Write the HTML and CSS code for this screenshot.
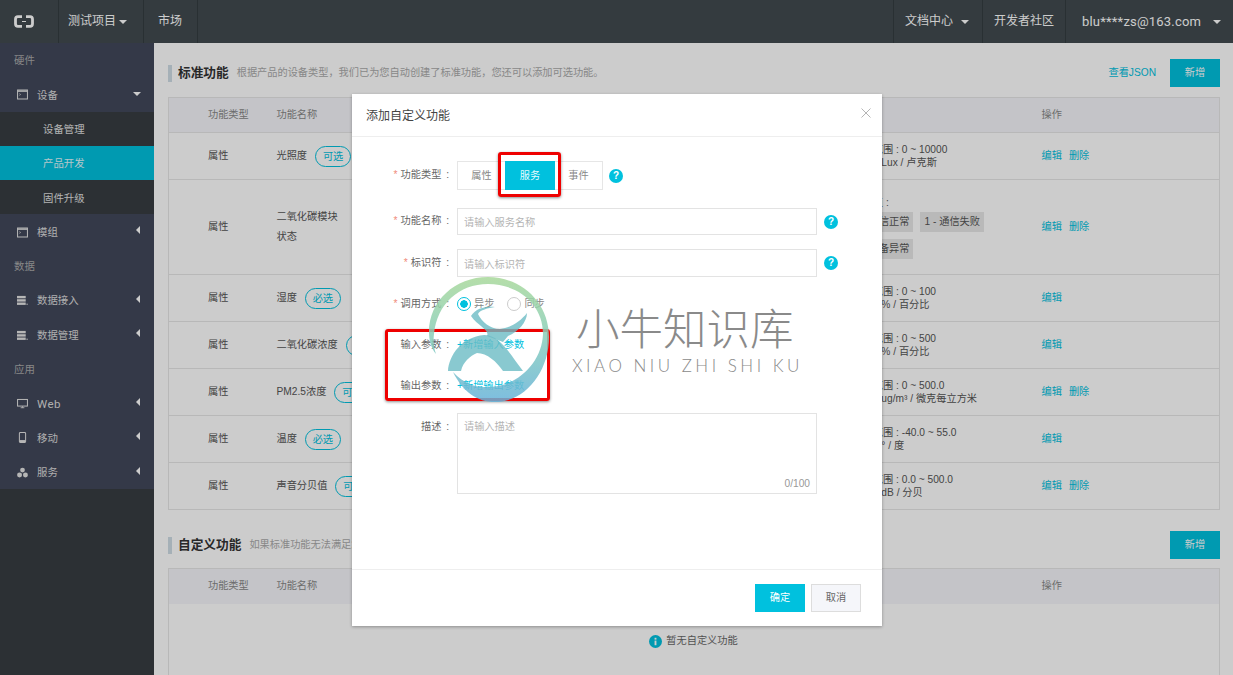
FILE: index.html
```html
<!DOCTYPE html>
<html lang="zh-CN">
<head>
<meta charset="utf-8">
<title>添加自定义功能</title>
<link rel="stylesheet" href="styles.css">
</head>
<body>
<svg width="0" height="0" class="defs">
  <defs>
    <symbol id="i-term" viewBox="0 0 12 12"><rect x=".6" y="1.1" width="10.8" height="9.8" fill="none" stroke="currentColor" stroke-width="1.1"/><rect x="1" y="1.5" width="10" height="1.6" fill="currentColor"/><path d="M2.5 5l1.5 1-1.5 1" fill="none" stroke="currentColor" stroke-width=".7"/></symbol>
    <symbol id="i-data" viewBox="0 0 12 12"><rect x="0" y="1" width="9.5" height="2.6" fill="currentColor"/><rect x="0" y="4.6" width="9.5" height="2.6" fill="currentColor"/><rect x="0" y="8.2" width="9.5" height="2.6" fill="currentColor"/><rect x="10.4" y="9.4" width="1.2" height="1.4" fill="currentColor"/></symbol>
    <symbol id="i-web" viewBox="0 0 12 12"><rect x=".6" y="1.6" width="10.8" height="7.2" fill="none" stroke="currentColor" stroke-width="1.1"/><path d="M4 10.6h4M6 9v1.5" stroke="currentColor" stroke-width="1"/></symbol>
    <symbol id="i-mob" viewBox="0 0 12 12"><rect x="2.6" y=".6" width="6.8" height="10.8" rx="1" fill="none" stroke="currentColor" stroke-width="1.1"/><rect x="3" y="8.8" width="6" height="2.4" fill="currentColor"/></symbol>
    <symbol id="i-svc" viewBox="0 0 12 12"><circle cx="6" cy="3.4" r="2.6" fill="currentColor"/><circle cx="2.8" cy="8.8" r="2.7" fill="currentColor"/><circle cx="9.2" cy="8.8" r="2.7" fill="currentColor"/></symbol>
  </defs>
</svg>
<header class="topbar">
  <div class="cell logo-cell">
    <svg class="logo" viewBox="0 0 20 13"><path d="M8 1.6H4A2.6 2.6 0 0 0 1.5 4.2v4.6A2.6 2.6 0 0 0 4 11.4h4M12 1.6H16a2.6 2.6 0 0 1 2.5 2.6v4.6a2.6 2.6 0 0 1-2.5 2.6h-4" fill="none" stroke="#fff" stroke-width="2.8"/><path d="M8 6.5h4" stroke="#fff" stroke-width="1"/></svg>
  </div>
  <div class="cell proj">测试项目<i class="caret-down cd-near"></i></div>
  <div class="cell market">市场</div>
  <div class="spacer"></div>
  <div class="cell docs">文档中心<i class="caret-down cd-far"></i></div>
  <div class="cell comm">开发者社区</div>
  <div class="cell user"><span class="email">blu****zs@163.com</span><i class="caret-down cd-user"></i></div>
</header>
<div class="shell">
  <nav class="side">
    <div class="menu">
      <div class="label">硬件</div>
      <div class="item"><svg class="ico"><use href="#i-term"/></svg>设备<i class="caret-down cd-side"></i></div>
      <div class="sub">设备管理</div>
      <div class="sub active">产品开发</div>
      <div class="sub">固件升级</div>
      <div class="item"><svg class="ico"><use href="#i-term"/></svg>模组<i class="caret-left"></i></div>
      <div class="label">数据</div>
      <div class="item"><svg class="ico"><use href="#i-data"/></svg>数据接入<i class="caret-left"></i></div>
      <div class="item"><svg class="ico"><use href="#i-data"/></svg>数据管理<i class="caret-left"></i></div>
      <div class="label">应用</div>
      <div class="item"><svg class="ico"><use href="#i-web"/></svg><span class="web">Web</span><i class="caret-left"></i></div>
      <div class="item"><svg class="ico"><use href="#i-mob"/></svg>移动<i class="caret-left"></i></div>
      <div class="item"><svg class="ico"><use href="#i-svc"/></svg>服务<i class="caret-left"></i></div>
    </div>
  </nav>
  <main class="content">
    <div class="sec-head first">
      <h2 class="sec-title">标准功能</h2>
      <span class="sec-sub">根据产品的设备类型，我们已为您自动创建了标准功能，您还可以添加可选功能。</span>
      <span class="spacer"></span>
      <a class="json">查看JSON</a>
      <button class="btn-add">新增</button>
    </div>
    <table class="grid">
      <colgroup><col class="c1"><col class="c2"><col class="c3"><col class="c4"></colgroup>
      <thead><tr><th>功能类型</th><th>功能名称</th><th class="th-def">定义</th><th>操作</th></tr></thead>
      <tbody>
        <tr><td>属性</td><td><span class="nm">光照度<em class="pill">可选</em></span></td><td class="def">取值范围 : 0 ~ 10000<br>单位 : Lux / 卢克斯</td><td class="ops"><a>编辑</a><a>删除</a></td></tr>
        <tr class="tall"><td>属性</td><td class="two">二氧化碳模块<br>状态</td><td class="def">枚举值 :<div class="tags"><span>0 - 通信正常</span><span>1 - 通信失败</span><span>2 - 设备异常</span></div></td><td class="ops"><a>编辑</a><a>删除</a></td></tr>
        <tr><td>属性</td><td><span class="nm">湿度<em class="pill">必选</em></span></td><td class="def">取值范围 : 0 ~ 100<br>单位 : % / 百分比</td><td class="ops"><a>编辑</a></td></tr>
        <tr><td>属性</td><td><span class="nm">二氧化碳浓度<em class="pill">必选</em></span></td><td class="def">取值范围 : 0 ~ 500<br>单位 : % / 百分比</td><td class="ops"><a>编辑</a></td></tr>
        <tr><td>属性</td><td><span class="nm">PM2.5浓度<em class="pill">可选</em></span></td><td class="def">取值范围 : 0 ~ 500.0<br>单位 : ug/m³ / 微克每立方米</td><td class="ops"><a>编辑</a><a>删除</a></td></tr>
        <tr><td>属性</td><td><span class="nm">温度<em class="pill">必选</em></span></td><td class="def">取值范围 : -40.0 ~ 55.0<br>单位 : ° / 度</td><td class="ops"><a>编辑</a></td></tr>
        <tr><td>属性</td><td><span class="nm">声音分贝值<em class="pill">可选</em></span></td><td class="def">取值范围 : 0.0 ~ 500.0<br>单位 : dB / 分贝</td><td class="ops"><a>编辑</a><a>删除</a></td></tr>
      </tbody>
    </table>
    <div class="sec-head second">
      <h2 class="sec-title">自定义功能</h2>
      <span class="sec-sub">如果标准功能无法满足您的需求，您可以添加自定义功能。</span>
      <span class="spacer"></span>
      <button class="btn-add">新增</button>
    </div>
    <table class="grid">
      <colgroup><col class="c1"><col class="c2"><col class="c3"><col class="c4"></colgroup>
      <thead><tr><th>功能类型</th><th>功能名称</th><th class="th-def">定义</th><th>操作</th></tr></thead>
      <tbody><tr class="empty-row"><td colspan="4"><div class="empty"><svg class="info" viewBox="0 0 14 14"><circle cx="7" cy="7" r="7" fill="#00c1de"/><rect x="6" y="3" width="2" height="2" fill="#fff"/><rect x="6" y="6" width="2" height="5" fill="#fff"/></svg>暂无自定义功能</div></td></tr></tbody>
    </table>
  </main>
</div>

<div class="overlay">
  <section class="modal">
    <div class="m-head">
      <span>添加自定义功能</span>
      <svg class="close" viewBox="0 0 10 10"><path d="M.5.5l9 9M9.5.5l-9 9" stroke="#b5b5b5" stroke-width="1" fill="none"/></svg>
    </div>
    <div class="m-body">
      <div class="row r-type">
        <label class="req">功能类型 :</label>
        <div class="seg"><span>属性</span><span class="on">服务</span><span>事件</span></div>
        <span class="help">?</span>
      </div>
      <div class="row r-name">
        <label class="req">功能名称 :</label>
        <input class="field" placeholder="请输入服务名称">
        <span class="help">?</span>
      </div>
      <div class="row r-id">
        <label class="req">标识符 :</label>
        <input class="field" placeholder="请输入标识符">
        <span class="help">?</span>
      </div>
      <div class="row r-call">
        <label class="req">调用方式 :</label>
        <span class="radio on"></span><span class="rtext">异步</span>
        <span class="radio"></span><span class="rtext">同步</span>
      </div>
      <div class="row r-in"><label>输入参数 :</label><a class="link">+新增输入参数</a></div>
      <div class="row r-out"><label>输出参数 :</label><a class="link">+新增输出参数</a></div>
      <div class="row r-desc">
        <label>描述 :</label>
        <div class="ta-wrap">
          <textarea class="ta" placeholder="请输入描述"></textarea>
          <span class="count">0/100</span>
        </div>
      </div>
    </div>
    <div class="m-foot">
      <button class="b-ok">确定</button>
      <button class="b-cancel">取消</button>
    </div>
    <div class="mark mark-a"></div>
    <div class="mark mark-b"></div>
  </section>
</div>

<div class="wm">
  <svg class="wm-logo" viewBox="420 272 140 135">
    <defs>
      <linearGradient id="g" x1="0" y1="0" x2="0" y2="1">
        <stop offset="0" stop-color="#a8d89a"/>
        <stop offset=".5" stop-color="#86cdbb"/>
        <stop offset="1" stop-color="#66b2da"/>
      </linearGradient>
    </defs>
    <path d="M429 332C429 301 455 277 488 277C521 277 549 302 549 337C549 372 525 402 495 402C477 402 463 392 453 372C465 385 478 388 490 387C518 386 542 362 543 334C543 304 518 284 488 284C459 284 437 304 434 334C433 342 434 348 436 354C431 348 429 340 429 332Z" fill="url(#g)" opacity=".85"/>
    <path d="M471 316C476 308 486 306 495 307C488 308 480 310 478 314C482 322 490 329 500 329C510 328 520 322 527 313C527 322 518 332 508 336L503 342L487 336C490 330 478 326 471 316Z" fill="#6cbcc4" opacity=".8"/>
    <path fill-rule="evenodd" d="M448 371C449 355 462 337 484 335C500 335 510 354 523 371ZM461 371C463 362 470 356 477 353C487 353 497 362 503 371Z" fill="#6cbcc4" opacity=".8"/>
  </svg>
  <div class="wm-text">
    <div class="wm-cn">小牛知识库</div>
    <div class="wm-en">XIAO NIU ZHI SHI KU</div>
  </div>
</div>
</body>
</html>
```

FILE: styles.css
```css
* { box-sizing: border-box; }
html, body { margin: 0; height: 100%; }
body {
  position: relative;
  height: 675px;
  overflow: hidden;
  background: #fff;
  color: #555;
  font: 10.2px/1.2 "Liberation Sans", "Noto Sans CJK SC", sans-serif;
}
.defs { position: absolute; }
.spacer { flex: 1; }

/* top bar */
.topbar { display: flex; height: 43px; background: #414a4f; color: #fff; font-size: 12px; }
.cell { display: flex; align-items: center; border-right: 1px solid #343c40; white-space: nowrap; }
.logo-cell { width: 59px; padding-left: 14px; }
.logo { width: 20px; height: 13px; }
.proj { width: 85px; padding-left: 9px; }
.market { width: 54px; padding-left: 14px; }
.docs { width: 90px; padding-left: 11px; border-left: 1px solid #343c40; }
.comm { width: 83px; padding-left: 11px; }
.user { width: 167px; padding-left: 16px; border-right: 0; }
.email { font-family: Roboto, "Liberation Sans", sans-serif; font-size: 13px; letter-spacing: .2px; }
.caret-down { display: block; width: 0; height: 0; border: 4px solid transparent; border-top-color: #fff; border-bottom: 0; }
.cd-near { margin-left: 3px; }
.cd-far { margin-left: 8px; }
.cd-user { margin-left: 12px; }

/* layout */
.shell { display: flex; height: 632px; }
.side { width: 154px; flex: none; background: #373d41; }
.menu { background: #42485b; color: #dcdcdc; font-size: 10.4px; }
.label, .item, .sub { display: flex; align-items: center; height: 34.3px; position: relative; padding-top: 3px; }
.label { padding-left: 14px; color: #aaa; }
.item { padding-left: 17px; }
.ico { width: 11px; height: 11px; margin: -2px 9px 0 0; color: #e4e4e4; flex: none; }
.web { font-family: Roboto, "Liberation Sans", sans-serif; font-size: 11.5px; letter-spacing: .4px; }
.sub { padding-left: 43px; background: #373d41; color: #e0e0e0; }
.sub.active { background: #00c1de; color: #e0f8fc; }
.cd-side { position: absolute; right: 13px; top: 15px; }
.caret-left { position: absolute; right: 14px; top: 12px; width: 0; height: 0; border: 4px solid transparent; border-right-color: #fff; border-left: 0; }

/* content */
.content { flex: 1; min-width: 0; padding: 0 13px 0 14px; }
.sec-head { display: flex; align-items: center; height: 28px; }
.sec-head.first { margin-top: 16px; margin-bottom: 10px; }
.sec-head.second { margin-top: 21px; margin-bottom: 9px; }
.sec-title { margin: 0 8px 0 0; padding-left: 6px; border-left: 4px solid #cfdde5; font-size: 12.7px; line-height: 17px; font-weight: 700; color: #333; }
.sec-sub { color: #aaa; }
.json { color: #00c1de; margin-right: 14px; }
.btn-add { width: 50px; height: 28px; border: 0; background: #00c1de; color: #fff; font: inherit; }

.grid { width: 1052px; table-layout: fixed; border-collapse: collapse; border: 1px solid #e6e6e6; }
.c1 { width: 108px; }
.c2 { width: 576px; }
.c3 { width: 189px; }
.grid th { height: 35px; padding: 0; background: #f5f6fa; font-weight: 400; color: #888; text-align: left; }
.grid th:first-child, .grid td:first-child { padding-left: 39px; }
.grid td { height: 47px; padding: 0; border-top: 1px solid #e6e6e6; color: #555; }
.tall td { height: 95px; }
.two { line-height: 20px; }
.nm { display: inline-flex; align-items: center; }
.pill { display: block; margin-left: 8px; width: 36px; height: 21px; border: 1px solid #00c1de; border-radius: 11px; color: #00c1de; font-style: normal; line-height: 19px; text-align: center; }
.def { line-height: 13px; }
.tags { display: flex; flex-wrap: wrap; gap: 7px; margin: 3px 0 0 -2.5px; }
.tags span { height: 20px; padding: 0 4px; background: #e8e8e8; line-height: 20px; }
.ops a { color: #00c1de; margin-right: 7px; }
.empty-row td { height: 72px; vertical-align: top; border-top: 0; }
.empty { display: flex; align-items: center; justify-content: center; padding: 31px 40px 0 0; color: #666; }
.info { width: 13px; height: 13px; margin-right: 4px; }

/* modal */
.overlay { position: absolute; inset: 0; display: flex; justify-content: center; align-items: flex-start; padding: 94px 0 0 1px; background: rgba(0, 0, 0, .2); }
.modal { position: relative; display: flex; flex-direction: column; width: 530px; height: 532px; background: #fff; box-shadow: 0 1px 3px rgba(0, 0, 0, .3); }
.m-head { display: flex; align-items: center; justify-content: space-between; height: 43px; padding: 2px 11px 0 14px; border-bottom: 1px solid #eee; font-size: 12px; color: #444; }
.close { width: 10px; height: 10px; margin-top: -6px; }
.m-body { flex: 1; padding-top: 24px; }
.row { display: flex; align-items: center; }
.row label { position: relative; width: 97px; margin-right: 8px; text-align: right; word-spacing: 2px; color: #666; flex: none; }
.req::before { content: "*"; margin-right: 3px; color: #f08a7a; }
.r-type { height: 29px; margin-bottom: 18px; }
.r-name { height: 27px; margin-bottom: 14px; }
.r-id { height: 28px; margin-bottom: 17px; }
.r-call { height: 20px; margin-bottom: 21px; }
.r-in { height: 20px; margin-bottom: 21px; }
.r-out { height: 20px; margin-bottom: 17px; }
.r-desc { align-items: flex-start; }
.r-desc label { margin-top: 8px; }
.seg { display: flex; height: 29px; border: 1px solid #e6e6e6; }
.seg span { width: 47px; line-height: 27px; text-align: center; color: #888; }
.seg .on { width: 50px; background: #00c1de; color: #e6fafd; margin: -1px 0; line-height: 29px; height: 29px; }
.help { width: 14px; height: 14px; border-radius: 50%; margin-left: 6px; background: #00c1de; color: #fff; font-size: 10px; font-weight: 700; line-height: 14px; text-align: center; }
.field { width: 360px; height: 100%; padding: 2px 6px 0; border: 1px solid #e3e3e3; font: inherit; outline: 0; }
.field::placeholder, .ta::placeholder { color: #b4b4b4; }
.r-name .help, .r-id .help { margin-left: 7px; }
.radio { width: 14px; height: 14px; border: 1px solid #ccc; border-radius: 50%; flex: none; }
.radio.on { border-color: #00c1de; background: radial-gradient(circle, #00c1de 0 3.5px, #fff 4px); }
.rtext { margin: 0 13px 0 3px; color: #888; }
.link { color: #00c1de; }
.ta-wrap { position: relative; width: 360px; height: 81px; }
.ta { display: block; width: 100%; height: 100%; padding: 7px 6px; border: 1px solid #e3e3e3; font: inherit; resize: none; outline: 0; }
.count { position: absolute; right: 7px; bottom: 4px; color: #999; }
.m-foot { display: flex; justify-content: flex-end; gap: 6px; height: 57px; padding: 14px 21px 0 0; border-top: 1px solid #eee; }
.m-foot button { width: 50px; height: 28px; font: inherit; padding: 0; }
.b-ok { border: 0; background: #00c1de; color: #fff; }
.b-cancel { border: 1px solid #ddd; background: #f5f6fa; color: #666; }
.mark { position: absolute; border: 3px solid #ee0000; border-radius: 3px; box-shadow: 0 1px 3px rgba(0, 0, 0, .45); }
.mark-a { left: 146px; top: 58px; width: 63px; height: 45px; }
.mark-b { left: 33px; top: 235px; width: 165px; height: 72px; }

/* watermark */
.wm { position: absolute; left: 420px; top: 272px; display: flex; pointer-events: none; }
.wm-logo { width: 140px; height: 135px; flex: none; }
.wm-text { margin: 29px 0 0 12px; white-space: nowrap; color: #8a8a8a; }
.wm-cn { font-family: "Noto Sans CJK SC", sans-serif; font-size: 43.5px; font-weight: 300; line-height: 52px; margin-left: 4px; }
.wm-en { font-family: Lato, sans-serif; font-size: 17px; font-weight: 300; line-height: 20px; letter-spacing: 3.5px; margin-top: 3px; }
```
